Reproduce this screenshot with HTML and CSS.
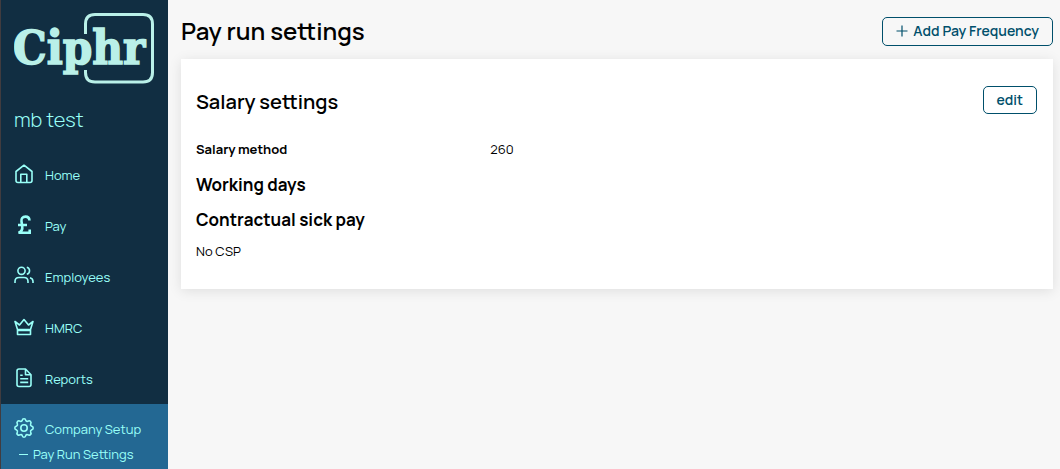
FILE: index.html
```html
<!DOCTYPE html>
<html lang="en">
<head>
<meta charset="utf-8">
<meta name="viewport" content="width=device-width, initial-scale=1">
<title>Pay run settings</title>
<link rel="stylesheet" href="styles.css">
</head>
<body>
<div class="app">
  <aside class="sidebar">
    <svg class="logo" viewBox="0 0 142 72" role="img" aria-label="Ciphr">
      <path class="logo-frame" d="M71.500 22V12Q71.500 2.500 81 2.500H129Q138.500 2.500 138.500 12V60.500Q138.500 70 129 70H81Q71.500 70 71.500 60.500V58"/>
      <text class="logo-text" x="-1" y="52">Ciphr</text>
    </svg>
    <p class="company">mb test</p>
    <nav class="nav">
      <a class="nav-item" href="#"><svg class="icon" viewBox="0 0 20 20"><path d="M2 7.500 10 1.200l8 6.300V16.500q0 2-2 2H4q-2 0-2-2zM6.800 18.500V10.200h6V18.500"/></svg><span>Home</span></a>
      <a class="nav-item" href="#"><svg class="icon icon-pound" viewBox="0 0 20 20"><path d="M15.500 5.500C15.300 2.800 13.800 1.600 11.500 1.600 8.500 1.600 7 3.800 7.500 6.500L8.200 11C8.700 14 8 16.500 4.500 17.700H15.700V14.500M4 10H13"/></svg><span>Pay</span></a>
      <a class="nav-item" href="#"><svg class="icon" viewBox="0 0 20 20"><circle cx="7.500" cy="4.800" r="3.600"/><path d="M1 17V15.500q0-4 4-4h5q4 0 4 4V17M12.800 1.300a3.600 3.600 0 0 1 0 7M16 11.700q3 .8 3 3.800V17"/></svg><span>Employees</span></a>
      <a class="nav-item" href="#"><svg class="icon" viewBox="0 0 20 20"><path d="M1 4.500 5.500 8 10 2.500l4.500 5.500L19 4.500l-2.500 8h-13zM3.500 12.500V17.500h13V12.500M4 13.400h12"/></svg><span>HMRC</span></a>
      <a class="nav-item" href="#"><svg class="icon" viewBox="0 0 20 20"><path d="M11.500 1H5Q3 1 3 3V16.500q0 2 2 2h10q2 0 2-2V6.800zM11.500 1V6.800h5.500M6.200 7.200h2.500M6.200 10.800h8M6.200 14.400h8"/></svg><span>Reports</span></a>
      <div class="nav-group">
        <a class="nav-item" href="#"><svg class="icon" viewBox="0 0 20 20"><circle cx="10" cy="10" r="3.200"/><path d="M8.200 2.500Q8.400.8 10 .8t1.800 1.700q.5 1.300 1.900.8 1.500-1.100 2.700 0t.2 2.900q-.4 1.300.9 1.900 1.700.3 1.700 1.900t-1.700 1.900q-1.300.6-.9 1.900 1 1.600-.2 2.800t-2.700.1q-1.400-.5-1.900.8-.2 1.700-1.800 1.700t-1.800-1.700q-.5-1.300-1.900-.8-1.500 1.100-2.700-.1t-.2-2.800q.4-1.300-.9-1.900Q.8 11.600.8 10t1.700-1.900q1.300-.6.9-1.900-1-1.800.2-2.900t2.700 0q1.400.5 1.900-.8z"/></svg><span>Company Setup</span></a>
        <a class="nav-sub" href="#" aria-current="page"><span class="dash"></span>Pay Run Settings</a>
      </div>
    </nav>
  </aside>
  <main class="main">
    <header class="page-head">
      <h1>Pay run settings</h1>
      <button class="btn btn-add" type="button"><svg class="plus" viewBox="0 0 12 12"><path d="M6 .5v11M.5 6h11"/></svg>Add Pay Frequency</button>
    </header>
    <section class="card">
      <div class="card-head">
        <h2>Salary settings</h2>
        <button class="btn btn-edit" type="button">edit</button>
      </div>
      <dl class="row"><dt>Salary method</dt><dd>260</dd></dl>
      <h3>Working days</h3>
      <h3>Contractual sick pay</h3>
      <p class="note">No CSP</p>
    </section>
  </main>
</div>
</body>
</html>
```
FILE: styles.css
```css
* { box-sizing: border-box; }
body {
  margin: 0;
  background: #f7f7f7;
  color: #000;
  font: 13px/20px Manrope, Inter, sans-serif;
}
h1, h2, h3, p, dl, dd { margin: 0; }
a { color: inherit; text-decoration: none; }
.app { display: flex; min-height: 100vh; }
.sidebar {
  flex: 0 0 168px;
  padding-top: 12px;
  border-left: 1px solid #413c3f;
  background: #112e42;
  color: #99fff8;
}
.logo { display: block; width: 142px; height: 72px; margin-left: 13px; }
.logo-frame { fill: none; stroke: #b9f0e8; stroke-width: 3; }
.logo-text {
  fill: #b9f0e8;
  stroke: #b9f0e8;
  stroke-width: 1.5px;
  font: bold 47px "DejaVu Serif Condensed", "DejaVu Serif", serif;
}
.company { padding: 22px 13px 0; font-size: 20px; line-height: 28px; font-weight: 300; }
.nav { padding-top: 15px; }
.nav-item { display: flex; align-items: center; gap: 11px; height: 51px; padding-left: 13px; }
.icon { width: 20px; height: 20px; margin-bottom: 2px; fill: none; stroke: currentColor; stroke-width: 1.6; stroke-linejoin: round; }
.icon-pound { stroke-width: 2.6; stroke-linejoin: miter; }
.nav-group { height: 65px; background: #236893; }
.nav-group .nav-item { height: 49px; }
.nav-sub { display: flex; align-items: center; gap: 5px; padding-left: 18px; line-height: 16px; margin-top: -7px; }
.nav-sub, .nav-item { font-size: 13px; }
.dash { width: 9px; height: 1px; background: currentColor; }
.main { flex: 1; min-width: 0; padding: 16px 7px 16px 13px; }
.page-head { display: flex; justify-content: space-between; align-items: center; height: 30px; margin-bottom: 13px; }
h1 { font-size: 24px; line-height: 28px; font-weight: 600; }
h2 { font-size: 20px; line-height: 28px; font-weight: 600; }
h3 { margin-top: 11px; font-size: 17px; line-height: 24px; font-weight: 700; }
.btn {
  display: flex;
  align-items: center;
  justify-content: center;
  border: 1px solid #004f6b;
  border-radius: 5px;
  background: transparent;
  color: #004f6b;
  font: 600 14px/20px Manrope, Inter, sans-serif;
}
.btn-add { height: 29px; padding: 0 13px; gap: 5px; }
.btn-edit { height: 28px; padding: 0 13px; }
.plus { width: 12px; height: 12px; fill: none; stroke: currentColor; stroke-width: 1.2; }
.card { padding: 27px 16px 28px 15px; background: #fff; box-shadow: 0 2px 12px rgba(0, 0, 0, .1); }
.card-head { display: flex; justify-content: space-between; align-items: flex-start; }
.card-head h2 { padding-top: 2px; }
.row { display: grid; grid-template-columns: 35% 1fr; margin-top: 23px; padding-bottom: 3px; }
dt { font-weight: 700; }
.note { margin-top: 9px; }
```
